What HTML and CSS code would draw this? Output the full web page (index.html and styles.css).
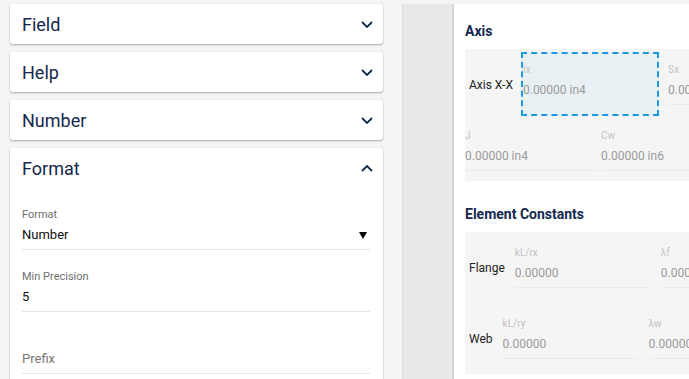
FILE: index.html
```html
<!DOCTYPE html>
<html lang="en">
<head>
  <meta charset="UTF-8" />
  <meta name="viewport" content="width=device-width, initial-scale=1.0"/>
  <title>Section Properties</title>
  <link rel="stylesheet" href="styles.css">
</head>
<body>
  <aside class="sidebar">
    <div class="card">
      <div class="card-header">
        <span>Field</span>
        <svg class="chevron" width="12" height="7" viewBox="0 0 12 7"><path d="M1 1 L6 6 L11 1"/></svg>
      </div>
    </div>
    <div class="card">
      <div class="card-header">
        <span>Help</span>
        <svg class="chevron" width="12" height="7" viewBox="0 0 12 7"><path d="M1 1 L6 6 L11 1"/></svg>
      </div>
    </div>
    <div class="card">
      <div class="card-header">
        <span>Number</span>
        <svg class="chevron" width="12" height="7" viewBox="0 0 12 7"><path d="M1 1 L6 6 L11 1"/></svg>
      </div>
    </div>
    <div class="card card-open">
      <div class="card-header">
        <span>Format</span>
        <svg class="chevron" width="12" height="7" viewBox="0 0 12 7"><path d="M1 6 L6 1 L11 6"/></svg>
      </div>
      <div class="card-body">
        <div class="form-field">
          <label class="form-label">Format</label>
          <div class="form-input select">
            <span>Number</span>
            <span class="caret"></span>
          </div>
        </div>
        <div class="form-field">
          <label class="form-label">Min Precision</label>
          <div class="form-input">5</div>
        </div>
        <div class="form-field">
          <label class="form-label"></label>
          <div class="form-input placeholder">Prefix</div>
        </div>
      </div>
    </div>
  </aside>

  <main class="workspace">
    <div class="gutter"></div>
    <section class="sheet">
      <h2 class="sheet-title first">Axis</h2>
      <div class="group group-axis">
        <div class="row row-top">
          <div class="row-label">Axis X-X</div>
          <div class="field focused">
            <div class="field-label">Ix</div>
            <div class="field-value">0.00000 in4</div>
          </div>
          <div class="field">
            <div class="field-label">Sx</div>
            <div class="field-value">0.00000 in3</div>
          </div>
        </div>
        <div class="row row-bottom">
          <div class="field tight">
            <div class="field-label">J</div>
            <div class="field-value">0.00000 in4</div>
          </div>
          <div class="field tight">
            <div class="field-label">Cw</div>
            <div class="field-value">0.00000 in6</div>
          </div>
        </div>
      </div>

      <h2 class="sheet-title">Element Constants</h2>
      <div class="group group-elements">
        <div class="row">
          <div class="row-label">Flange</div>
          <div class="field">
            <div class="field-label">kL/rx</div>
            <div class="field-value">0.00000</div>
          </div>
          <div class="field">
            <div class="field-label">λf</div>
            <div class="field-value">0.00000</div>
          </div>
        </div>
        <div class="row">
          <div class="row-label">Web</div>
          <div class="field">
            <div class="field-label">kL/ry</div>
            <div class="field-value">0.00000</div>
          </div>
          <div class="field">
            <div class="field-label">λw</div>
            <div class="field-value">0.00000</div>
          </div>
        </div>
      </div>
    </section>
  </main>
</body>
</html>
```

FILE: styles.css
```css
body {
  font-family: Roboto, 'Liberation Sans', sans-serif;
  background-color: #f5f5f5;
  margin: 0;
  height: 100vh;
  display: flex;
  overflow: hidden;
}

/* left column with the accordion cards */
.sidebar {
  width: 373px;
  flex-shrink: 0;
  padding: 4px 0 0 10px;
  display: flex;
  flex-direction: column;
  gap: 8px;
}

.card {
  background: #ffffff;
  border-radius: 3px;
  box-shadow: 0 1px 2px rgba(0, 0, 0, 0.3), 0 0 1px rgba(0, 0, 0, 0.08);
}

.card-header {
  height: 40px;
  padding: 0 10px 0 12px;
  display: flex;
  align-items: center;
  justify-content: space-between;
  font-size: 18px;
  color: #14284f;
}

.chevron path {
  fill: none;
  stroke: #14284f;
  stroke-width: 1.8;
}

.card-body {
  padding: 0 13px 20px 12px;
}

.form-field {
  margin-top: 20px;
}

.form-label {
  display: block;
  height: 14px;
  line-height: 14px;
  font-size: 11px;
  color: #707070;
  margin-bottom: 3px;
}

.form-input {
  line-height: 20px;
  font-size: 13px;
  color: #111111;
  padding-bottom: 4px;
  border-bottom: 1px solid #e6e6ee;
}

.select {
  display: flex;
  justify-content: space-between;
  align-items: center;
}

.caret {
  width: 0;
  height: 0;
  margin-right: 3px;
  border-left: 4.5px solid transparent;
  border-right: 4.5px solid transparent;
  border-top: 7px solid #000000;
}

.placeholder {
  color: #777777;
}

/* right side */
.workspace {
  flex: 1;
  margin-left: 19px;
  padding-top: 4px;
  display: flex;
}

.gutter {
  width: 49px;
  flex-shrink: 0;
  background: #e8e8e8;
  border-left: 1px solid #dddddd;
}

.sheet {
  flex: 1;
  background: #ffffff;
  border-left: 2px solid #d6d6d6;
  padding-left: 11px;
  overflow: hidden;
}

.sheet-title {
  margin: 23px 0 8px 0;
  font-size: 14px;
  line-height: 20px;
  font-weight: 700;
  color: #14284f;
  white-space: nowrap;
}

.sheet-title.first {
  margin-top: 17px;
}

.group {
  width: 420px;
  background: #f5f5f5;
}

.group-axis {
  padding: 15px 0 10px 0;
}

.group-elements {
  padding: 15px 0 15px 0;
  display: flex;
  flex-direction: column;
  gap: 30px;
}

.row {
  display: flex;
  align-items: center;
}

.row-top {
  padding-bottom: 11px;
}

.row-bottom {
  padding-top: 14px;
  gap: 2px;
}

.row-label {
  padding-left: 4px;
  margin-right: 10px;
  font-size: 12px;
  color: #222222;
  white-space: nowrap;
}

.field {
  width: 134px;
  flex-shrink: 0;
  margin-right: 12px;
}

.field.tight {
  margin-right: 0;
}

.field.focused {
  margin: -12px 9px -11px -2px;
  padding: 10px 0 9px 0;
  border: 2px dashed #1a9be0;
  background: #e8f0f4;
}

.field-label {
  font-size: 10px;
  line-height: 12px;
  color: #c2c2c2;
  margin-bottom: 4px;
}

.field-value {
  font-size: 12px;
  line-height: 20px;
  color: #9a9a9a;
  padding-bottom: 4px;
  border-bottom: 1px solid #ebebeb;
  white-space: nowrap;
}
```
